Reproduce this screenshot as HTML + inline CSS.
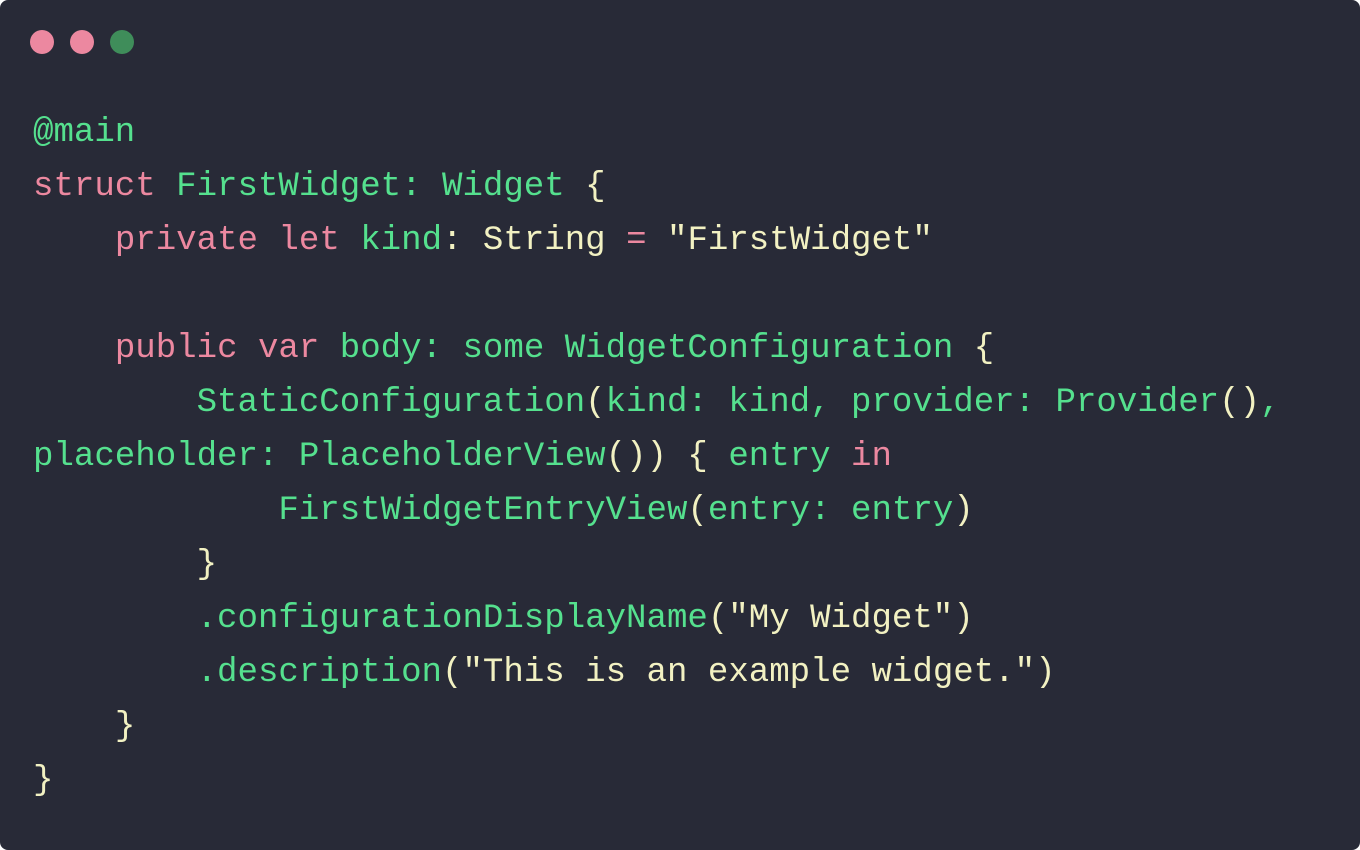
<!DOCTYPE html>
<html><head><style>
html,body{margin:0;padding:0;background:#fff;}
.win{position:absolute;left:0;top:0;width:1360px;height:850px;background:#282a37;border-radius:8px;overflow:hidden;}
.dot{position:absolute;top:30px;width:24px;height:24px;border-radius:50%;}
pre{position:absolute;left:33px;top:106px;margin:0;font-family:"Liberation Mono",monospace;font-size:34.1px;line-height:54px;color:#55e08e;white-space:pre;}
.k{color:#ec88a0}.y{color:#f2f1c2}
</style></head><body>
<div class="win">
<div class="dot" style="left:30px;background:#ec88a0"></div>
<div class="dot" style="left:70px;background:#ec88a0"></div>
<div class="dot" style="left:110px;background:#3f8d5a"></div>
<pre>@main
<span class="k">struct</span> FirstWidget: Widget <span class="y">{</span>
    <span class="k">private let</span> kind<span class="y">: String</span> <span class="k">=</span> <span class="y">"FirstWidget"</span>

    <span class="k">public var</span> body: some WidgetConfiguration <span class="y">{</span>
        StaticConfiguration<span class="y">(</span>kind: kind, provider: Provider<span class="y">()</span>,
placeholder: PlaceholderView<span class="y">())</span> <span class="y">{</span> entry <span class="k">in</span>
            FirstWidgetEntryView<span class="y">(</span>entry: entry<span class="y">)</span>
        <span class="y">}</span>
        .configurationDisplayName<span class="y">("My Widget")</span>
        .description<span class="y">("This is an example widget.")</span>
    <span class="y">}</span>
<span class="y">}</span></pre>
</div>
</body></html>
